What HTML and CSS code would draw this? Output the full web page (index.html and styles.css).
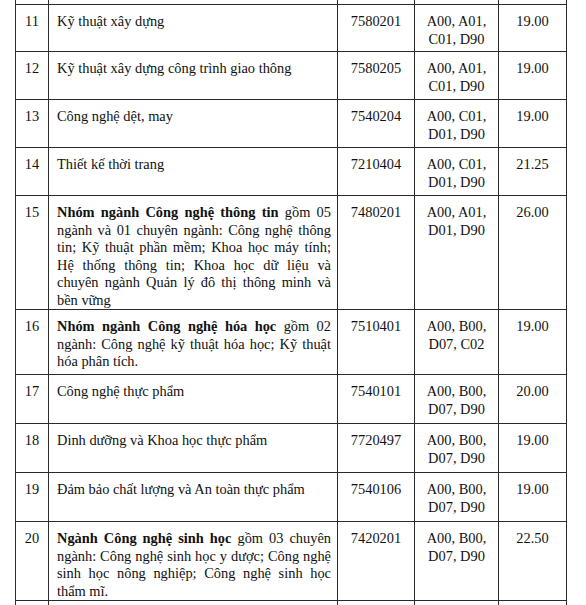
FILE: index.html
```html
<!DOCTYPE html>
<html>
<head>
<meta charset="utf-8">
<link rel="stylesheet" href="styles.css">
</head>
<body>
<div class="page">
<table class="grid">
<colgroup>
<col class="c-stt"><col class="c-name"><col class="c-code"><col class="c-combo"><col class="c-score">
</colgroup>
<tbody>
<tr class="spacer"><td></td><td></td><td></td><td></td><td></td></tr>
<tr class="h47"><td class="num">11</td><td class="name">Kỹ thuật xây dựng</td><td class="ctr">7580201</td><td class="ctr">A00, A01,<br>C01, D90</td><td class="ctr">19.00</td></tr>
<tr class="h48"><td class="num">12</td><td class="name">Kỹ thuật xây dựng công trình giao thông</td><td class="ctr">7580205</td><td class="ctr">A00, A01,<br>C01, D90</td><td class="ctr">19.00</td></tr>
<tr class="h48"><td class="num">13</td><td class="name">Công nghệ dệt, may</td><td class="ctr">7540204</td><td class="ctr">A00, C01,<br>D01, D90</td><td class="ctr">19.00</td></tr>
<tr class="h48"><td class="num">14</td><td class="name">Thiết kế thời trang</td><td class="ctr">7210404</td><td class="ctr">A00, C01,<br>D01, D90</td><td class="ctr">21.25</td></tr>
<tr class="h113"><td class="num">15</td><td class="name just"><b>Nhóm ngành Công nghệ thông tin</b> gồm 05 ngành và 01 chuyên ngành: Công nghệ thông tin; Kỹ thuật phần mềm; Khoa học máy tính; Hệ thống thông tin; Khoa học dữ liệu và chuyên ngành Quản lý đô thị thông minh và bền vững</td><td class="ctr">7480201</td><td class="ctr">A00, A01,<br>D01, D90</td><td class="ctr">26.00</td></tr>
<tr class="h65"><td class="num">16</td><td class="name just"><b>Nhóm ngành Công nghệ hóa học</b> gồm 02 ngành: Công nghệ kỹ thuật hóa học; Kỹ thuật hóa phân tích.</td><td class="ctr">7510401</td><td class="ctr">A00, B00,<br>D07, C02</td><td class="ctr">19.00</td></tr>
<tr class="h49"><td class="num">17</td><td class="name">Công nghệ thực phẩm</td><td class="ctr">7540101</td><td class="ctr">A00, B00,<br>D07, D90</td><td class="ctr">20.00</td></tr>
<tr class="h49"><td class="num">18</td><td class="name">Dinh dưỡng và Khoa học thực phẩm</td><td class="ctr">7720497</td><td class="ctr">A00, B00,<br>D07, D90</td><td class="ctr">19.00</td></tr>
<tr class="h49"><td class="num">19</td><td class="name">Đảm bảo chất lượng và An toàn thực phẩm</td><td class="ctr">7540106</td><td class="ctr">A00, B00,<br>D07, D90</td><td class="ctr">19.00</td></tr>
<tr class="h78"><td class="num">20</td><td class="name just"><b>Ngành Công nghệ sinh học</b> gồm 03 chuyên ngành: Công nghệ sinh học y dược; Công nghệ sinh học nông nghiệp; Công nghệ sinh học thẩm mĩ.</td><td class="ctr">7420201</td><td class="ctr">A00, B00,<br>D07, D90</td><td class="ctr">22.50</td></tr>
<tr class="h40"><td></td><td></td><td></td><td></td><td></td></tr>
</tbody>
</table>
</div>
</body>
</html>
```

FILE: styles.css
```css
html, body {
  margin: 0;
  padding: 0;
  background: #ffffff;
  overflow: hidden;
}
.page {
  width: 586px;
  height: 605px;
  overflow: hidden;
  padding-left: 15px;
  box-sizing: border-box;
}
.grid {
  border-collapse: collapse;
  table-layout: fixed;
  width: 551px;
  color: #111;
}
.grid td {
  font-family: "Liberation Serif", "Times New Roman", serif;
  font-size: 14.4px;
  line-height: 17.5px;
  border: 1.5px solid #2b2b2b;
  vertical-align: top;
  padding: 8px 0 0 0;
}
.c-stt { width: 33px; }
.c-name { width: 289px; }
.c-code { width: 77px; }
.c-combo { width: 84px; }
.c-score { width: 68px; }
.grid .spacer td {
  border-top: none;
  height: 4px;
  padding: 0;
}
.num { text-align: center; }
.ctr { text-align: center; }
.grid td.name {
  padding-left: 8px;
  padding-right: 6px;
  text-align: left;
}
.grid td.just { text-align: justify; }
.h47 { height: 47px; }
.h48 { height: 48px; }
.h49 { height: 49px; }
.h65 { height: 65px; }
.h78 { height: 78px; }
.h113 { height: 113px; }
.h40 { height: 40px; }
```
